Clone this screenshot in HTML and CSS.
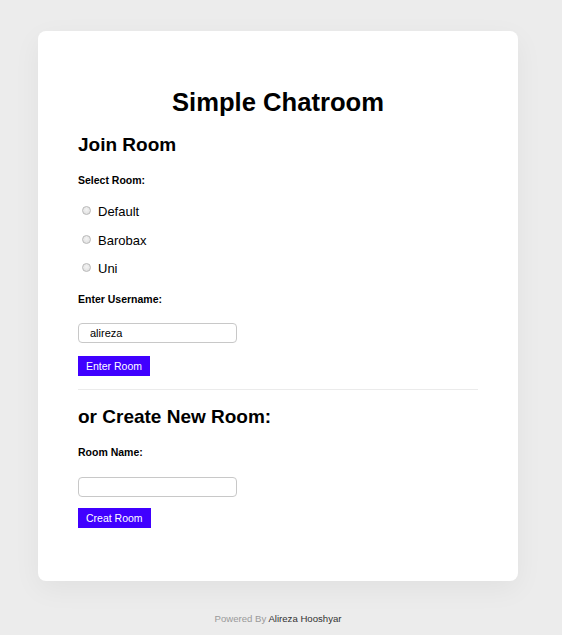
FILE: index.html
```html
<!DOCTYPE html>
<html lang="en">
<head>
<meta charset="utf-8">
<title>Simple Chatroom</title>
<link rel="stylesheet" href="styles.css">
</head>
<body>
<div class="page">
  <main class="card">
    <h1 class="title">Simple Chatroom</h1>
    <h2 class="heading">Join Room</h2>
    <div class="label lbl-select">Select Room:</div>
    <div class="radios">
      <label class="radio-row"><input type="radio" name="room" class="radio"><span>Default</span></label>
      <label class="radio-row"><input type="radio" name="room" class="radio"><span>Barobax</span></label>
      <label class="radio-row"><input type="radio" name="room" class="radio"><span>Uni</span></label>
    </div>
    <div class="label lbl-user">Enter Username:</div>
    <input class="field field-user" type="text" value="alireza">
    <button class="btn">Enter Room</button>
    <hr class="divider">
    <h2 class="heading heading-create">or Create New Room:</h2>
    <div class="label lbl-room">Room Name:</div>
    <input class="field field-room" type="text" value="">
    <button class="btn">Creat Room</button>
  </main>
  <footer class="footer"><span class="muted">Powered By</span> <span class="author">Alireza Hooshyar</span></footer>
</div>
</body>
</html>
```
FILE: styles.css
```css
html, body {
  margin: 0;
  padding: 0;
  background: #ececec;
  font-family: "Liberation Sans", Arial, sans-serif;
  color: #000;
}
.page {
  width: 480px;
  margin-left: 38px;
  padding-top: 31px;
}
.card {
  background: #fff;
  border-radius: 8px;
  box-shadow: 0 8px 28px rgba(0, 0, 0, 0.05);
  padding: 56px 40px 53px;
  display: flex;
  flex-direction: column;
  align-items: flex-start;
}
.title {
  align-self: stretch;
  text-align: center;
  font-size: 25.6px;
  line-height: 30px;
  font-weight: bold;
  margin: 0 0 17px;
}
.heading {
  font-size: 19px;
  line-height: 22px;
  font-weight: bold;
  margin: 0 0 18px;
}
.heading-create {
  margin-bottom: 18px;
}
.label {
  font-size: 10.5px;
  line-height: 13px;
  font-weight: bold;
}
.lbl-select { margin-bottom: 17px; }
.lbl-user { margin-bottom: 17px; }
.lbl-room { margin-bottom: 18px; }
.radios {
  display: flex;
  flex-direction: column;
  gap: 12.5px;
  margin-bottom: 16px;
}
.radio-row {
  display: flex;
  align-items: flex-start;
  font-size: 13px;
  line-height: 16px;
  height: 16px;
}
.radio {
  appearance: none;
  -webkit-appearance: none;
  width: 9px;
  height: 9px;
  margin: 2px 7px 0 4px;
  border-radius: 50%;
  border: 1px solid #b9b9b9;
  box-sizing: border-box;
  background: radial-gradient(circle at 50% 40%, #f4f4f4 0%, #dcdcdc 100%);
}
.field {
  box-sizing: border-box;
  width: 159px;
  height: 20px;
  border: 1px solid #c8c8c8;
  border-radius: 4px;
  padding: 0 11px;
  font-family: "Liberation Sans", Arial, sans-serif;
  font-size: 11px;
  color: #000;
  background: #fff;
  outline: none;
}
.field-user { margin-bottom: 13px; }
.field-room { margin-bottom: 11.5px; }
.btn {
  height: 20px;
  padding: 0 8px;
  border: none;
  border-radius: 0;
  background: #4000ff;
  color: #fff;
  font-family: "Liberation Sans", Arial, sans-serif;
  font-size: 10.5px;
  line-height: 20px;
  cursor: pointer;
}
.divider {
  align-self: stretch;
  border: none;
  height: 1px;
  background: #ebebeb;
  margin: 13px 0 15.5px;
}
.footer {
  margin-top: 31.7px;
  text-align: center;
  font-size: 9.6px;
  line-height: 12px;
}
.muted { color: #9a9a9a; }
.author { color: #333; }
```
